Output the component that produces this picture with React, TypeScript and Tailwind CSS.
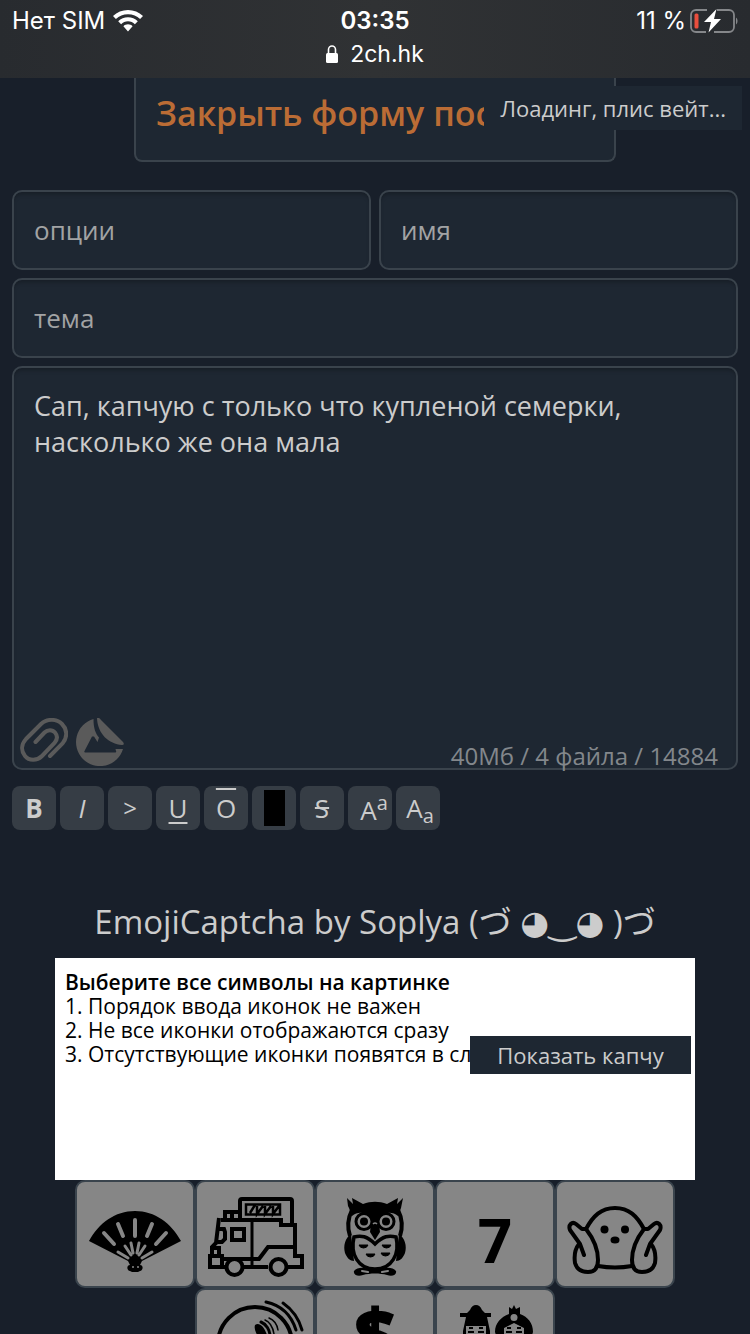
import React from "react";

function WifiIcon() {
  return (
    <svg viewBox="0 0 30 22" className="h-[22px] w-[30px]" fill="white" aria-hidden="true">
      <path d="M15 0C9.300 0 4 2.200 0 6.100L2.900 9.100C6.100 6 10.300 4.200 15 4.200S23.900 6 27.100 9.100L30 6.100C26 2.200 20.700 0 15 0Z" />
      <path d="M15 7.200c-3.700 0-7.200 1.500-9.800 4l2.900 3c1.800-1.800 4.200-2.900 6.900-2.900s5.100 1.100 6.900 2.900l2.900-3c-2.600-2.500-6.100-4-9.800-4Z" />
      <path d="M15 14.300c-1.800 0-3.400.7-4.600 1.900L15 21.600l4.600-5.400c-1.200-1.200-2.800-1.900-4.600-1.900Z" />
    </svg>
  );
}

function LockIcon() {
  return (
    <svg viewBox="0 0 12 18" className="h-[18px] w-3" aria-hidden="true">
      <rect y="8" width="12" height="10" rx="1.500" fill="white" />
      <path d="M2.500 9V4.500a3.500 3.500 0 0 1 7 0V9" fill="none" stroke="white" strokeWidth="1.600" />
    </svg>
  );
}

function BatteryIcon() {
  return (
    <svg viewBox="0 0 48 24" className="h-6 w-12" aria-hidden="true">
      <path d="M17 1H6a5 5 0 0 0-5 5v12a5 5 0 0 0 5 5h10M24 23h15a5 5 0 0 0 5-5V6a5 5 0 0 0-5-5H27" fill="none" stroke="#85878a" strokeWidth="1.800" />
      <path d="M46 8.500c2 1.500 2 5.500 0 7Z" fill="#85878a" />
      <rect x="4.500" y="4.500" width="4" height="15" rx="1.500" fill="#ea4e3d" />
      <path d="M26.500 0 14 13h7l-2.500 10.500L31 10h-7Z" fill="white" />
    </svg>
  );
}

function ClipIcon() {
  return (
    <svg viewBox="0 0 48 48" className="size-12" fill="none" stroke="#5a5a5a" strokeWidth="4" strokeLinecap="round" aria-hidden="true">
      <path d="M30 38 42.500 25.500C48 19 47 11 42 6S27.500 0 21 6L6 21C1 26.500 1 33 5 38s12 5 17 0L34.500 25c3-3.500 3-7.500.5-10.500s-7.500-3-10.500 0L15.500 24" />
    </svg>
  );
}

function StickerIcon() {
  return (
    <svg viewBox="0 0 48 48" className="size-12" fill="#5a5a5a" aria-hidden="true">
      <path d="M21 0Q23-1 25 2L47 24q2 3-1 3C33 26 21.500 16 21 0Z" />
      <path d="M17.500 1c0 9 2 14.500 5.500 18.500L21.500 24 18 18.500h-2L8.500 33c-.5 1 0 1.500 1 1.500H39c1 0 1.500-.5 1-1.500l-.5-2 7.500 0A24 24 0 1 1 17.500 1Z" />
    </svg>
  );
}

function FanIcon() {
  return (
    <>
      <path d="M12 59C22 41 38 29 58 29s36 12 46 30L65 79l-2 4c4 0 3 6 0 6l-2 1h-6l-2-1c-3 0-4-6 0-6l-2-4Z" fill="black" />
      <path d="M58 38v16M41 42l5 12M75 42l-5 12M27 51l10 11M89 51 79 62" stroke="#868686" strokeWidth="4" strokeLinecap="round" />
      <path d="M41 70l10 6M48 64l6 9M54 61l2 10M62 61l-2 10M68 64l-6 9M75 70l-10 6" stroke="#868686" strokeWidth="3" strokeLinecap="round" />
      <path d="M55 85h2M60 85h2" stroke="#868686" strokeWidth="1.500" />
    </>
  );
}

function TruckIcon() {
  return (
    <g fill="none" stroke="black" strokeWidth="4">
      <path d="M43 36V19q0-2 2-2h48q2 0 2 2v22" />
      <path d="M49 22.500h34v10H49ZM53 31l5-8M60 24v8l6-8M68 24v8l6-8M76 24v8l6-8" strokeWidth="2.500" />
      <path d="M28 37v-7h14M35 30v6" />
      <path d="M55 38v46" strokeWidth="3" />
      <path d="M24 38h60v5h14v31h7v11H91M71 85H47M28 85H13V74h12v10M15 73v-8l4-4 3-25M26 77h36l9-12h26" />
      <path d="M35 47h12v11H35ZM22 47h5l1 3v7l-3 3h-4M16 66h6v8" />
      <circle cx="37.500" cy="85" r="8" />
      <circle cx="81.500" cy="85" r="8" />
    </g>
  );
}

function OwlIcon() {
  return (
    <>
      {/* wings, head outline and feet */}
      <path d="M34 52c-6 4-8 12-6 19 2 5 5 8 9 8ZM82 52c6 4 8 12 6 19-2 5-5 8-9 8Z" />
      <path d="M33 54c-3-9-2-18 2-26h46c4 8 5 17 2 26" fill="none" stroke="black" strokeWidth="4" />
      <path d="M31 24l-1-8 6 6-1-6 11 6c8-3 16-3 24 0l11-6-1 6 6-6-2 10-3 8c-6-5-13-4-17 1l-2 7 1 8-5 8-5-8 1-8-2-7c-4-5-11-6-17-1l-3-8Z" />
      <path d="M37 89c3-4 10-4 14-2h14c4-2 11-2 14 2 1 4-4 6-9 4-7-2-17-2-24 0-5 2-10 0-9-4Z" />
      <path d="M45 89l6 1M65 90l6-1" stroke="#868686" strokeWidth="2" strokeLinecap="round" />
      {/* belly */}
      <path d="M58 62C50 54 44 53 37 55c-4 17 4 32 21 32s25-15 21-32c-7-2-13-1-21 7Z" fill="#868686" stroke="black" strokeWidth="3.500" />
      <path d="M42 63h9q-1 3-4.500 3t-4.500-3ZM65 63h9q-1 3-4.500 3t-4.500-3ZM49 72h9q-1 3-4.500 3t-4.500-3ZM64 71h9q-1 3-4.500 3t-4.500-3Z" stroke="black" />
      <g fill="#868686" stroke="black" strokeWidth="3">
        <circle cx="47" cy="39.500" r="8" />
        <circle cx="69" cy="39.500" r="8" />
      </g>
      <circle cx="47" cy="39.500" r="4" />
      <circle cx="69" cy="39.500" r="4" />
      <path d="M56 42q2-2 4 0" fill="none" stroke="#868686" strokeWidth="1.500" />
    </>
  );
}

function SevenIcon() {
  return (
    <text x="58" y="81" textAnchor="middle" fontSize="60" fontWeight="700" fontFamily="Open Sans, sans-serif">7</text>
  );
}

function GhostIcon() {
  return (
    <>
      <g fill="none" stroke="black" strokeWidth="4" strokeLinecap="round" strokeLinejoin="round">
        <path d="M29 47c7-13 15-21 29-21s22 8 29 21M41 84q17 3 34 0" />
        <path d="M29 47h-4l-6-5c-4-3-8 1-6 6l10 14 4 11M22 62c-4 5-5 12-4 19 2 7 8 9 13 9 7 0 10-4 10-12 0-12-5-22-12-31" />
        <path d="M87 47h4l6-5c4-3 8 1 6 6L93 62l-4 11M94 62c4 5 5 12 4 19-2 7-8 9-13 9-7 0-10-4-10-12 0-12 5-22 12-31" />
      </g>
      <circle cx="47.500" cy="47.500" r="4" />
      <circle cx="68" cy="47.500" r="4" />
      <ellipse cx="58" cy="58" rx="4.500" ry="3.500" />
    </>
  );
}

function DiscIcon() {
  return (
    <>
      <g fill="none" stroke="black" strokeLinecap="round">
        <circle cx="58" cy="54" r="37" strokeWidth="4" />
        <path d="M69 12c14 3 25 12 30 28M86 13c10 7 16 16 19 27" strokeWidth="3" />
        <path d="M64 32c5 2 9 8 9 14" strokeWidth="3" />
        <path d="M68 30c5 2 8 8 9 14M72 28c5 2 8 6 9 12" strokeWidth="1.500" />
      </g>
      <path d="M58 35c4-3 9 1 12 10l-3 8H62c1-6-6-12-4-18Z" />
      <path d="M38 46q4-4 7 0v10h-8Z" />
    </>
  );
}

function DollarIcon() {
  return (
    <text x="58" y="72" textAnchor="middle" fontSize="72" fontWeight="700" stroke="black" strokeWidth="3" fontFamily="Open Sans, sans-serif">$</text>
  );
}

function DollsIcon() {
  return (
    <>
      <path d="M33 20q2-5 6-5t6 5l3 3h6v4h-4l3 14v14H26V41l3-14h-6v-4h7Z" />
      <path d="M72 17l3 2 2-4 2 4 4-2v7c8 3 13 9 13 18l-4 13H62l-4-13c0-9 6-15 14-18Z" />
      <path d="M29 36h20v18H29ZM67 38l10-5 10 5v16H67Z" fill="#868686" />
      <circle cx="77" cy="27.500" r="3.500" fill="#868686" />
      <path d="M31 42h6M41 42h6M69 42h6M79 42h6M32 38h4M42 38h4M70 38h4M80 38h4" stroke="black" strokeWidth="2" />
    </>
  );
}

const markup = [
  { name: "Жирный", label: <b>B</b> },
  { name: "Курсив", label: <i>I</i> },
  { name: "Цитата", label: <span className="text-2xl">&gt;</span> },
  { name: "Подчёркнутый", label: <span className="underline underline-offset-4">U</span> },
  { name: "Надчёркнутый", label: <span className="overline">O</span> },
  { name: "Спойлер", label: <span className="block h-9 w-[21px] bg-black" /> },
  { name: "Зачёркнутый", label: <s>S</s> },
  { name: "Верхний индекс", label: <span className="pt-2 pl-2">A<sup className="text-xl">a</sup></span> },
  { name: "Нижний индекс", label: <span className="pt-1 pl-1">A<sub className="text-xl">a</sub></span> },
];

const emojis = [
  { name: "Веер", Icon: FanIcon },
  { name: "Грузовик", Icon: TruckIcon },
  { name: "Сова", Icon: OwlIcon },
  { name: "Семь", Icon: SevenIcon },
  { name: "Привидение", Icon: GhostIcon },
  { name: "Диск", Icon: DiscIcon },
  { name: "Доллар", Icon: DollarIcon },
  { name: "Куклы", Icon: DollsIcon },
];

const field =
  "block w-full rounded-[10px] border-2 border-[#3a434c] bg-[#1e2732] px-5 text-[#cccccc] shadow-[inset_0_4px_4px_-2px_rgba(0,0,0,0.25)] outline-none placeholder:text-[#a2a3a4]";

function StatusBar() {
  return (
    <header className="h-[78px] shrink-0 bg-linear-to-r from-[#282b2f] via-[#303234] to-[#282b2f] pt-1 font-['Inter',sans-serif] text-2xl text-white">
      <div className="grid grid-cols-3 items-center px-3 leading-[34px]">
        <div className="flex items-center gap-2">
          <span>Нет SIM</span>
          <WifiIcon />
        </div>
        <time className="text-center font-semibold">03:35</time>
        <div className="flex items-center justify-end gap-1">
          <span>11 %</span>
          <BatteryIcon />
        </div>
      </div>
      <div className="flex items-center justify-center gap-3 text-[23px] leading-8">
        <LockIcon />
        <span>2ch.hk</span>
      </div>
    </header>
  );
}

function PostForm() {
  return (
    <form className="mt-7 flex flex-col gap-2" onSubmit={(e) => e.preventDefault()}>
      <div className="grid grid-cols-2 gap-2">
        <input aria-label="опции" placeholder="опции" className={`${field} h-20 text-[26px]`} />
        <input aria-label="имя" placeholder="имя" className={`${field} h-20 text-[26px]`} />
      </div>
      <input aria-label="тема" placeholder="тема" className={`${field} h-20 text-[26px]`} />
      <div className="relative">
        <textarea
          aria-label="Комментарий"
          defaultValue="Сап, капчую с только что купленой семерки, насколько же она мала"
          className={`${field} h-[404px] resize-none py-5 text-[27px] leading-9`}
        />
        <div className="absolute bottom-1 left-2 flex gap-2">
          <button type="button" aria-label="Прикрепить файл"><ClipIcon /></button>
          <button type="button" aria-label="Стикеры"><StickerIcon /></button>
        </div>
        <span className="absolute right-5 bottom-0 text-2xl leading-7 text-[#83878c]">
          40Мб / 4 файла / 14884
        </span>
      </div>
      <div className="mt-2 flex gap-1">
        {markup.map(({ name, label }) => (
          <button
            key={name}
            type="button"
            aria-label={name}
            className="flex size-11 items-center justify-center rounded-lg bg-[#363d45] text-[26px] leading-none text-[#cccccc]"
          >
            {label}
          </button>
        ))}
      </div>
    </form>
  );
}

function Captcha() {
  return (
    <section className="mx-auto mt-16 max-w-[640px]">
      <h2 className="pb-2 text-center text-[33px] leading-[56px] whitespace-nowrap">
        EmojiCaptcha by Soplya (づ ◕‿◕ )づ
      </h2>
      <div className="relative h-[222px] bg-white px-[10px] py-3 text-[21px] leading-6 whitespace-nowrap text-black">
        <p className="font-semibold">Выберите все символы на картинке</p>
        <ol>
          <li>1. Порядок ввода иконок не важен</li>
          <li>2. Не все иконки отображаются сразу</li>
          <li>3. Отсутствующие иконки появятся в сл</li>
        </ol>
        <button
          type="button"
          className="absolute right-1 bottom-[106px] h-[38px] w-[221px] bg-[#1e2732] text-[22px] text-[#cccccc]"
        >
          Показать капчу
        </button>
      </div>
      <div className="flex flex-wrap justify-center">
        {emojis.map(({ name, Icon }) => (
          <button
            key={name}
            type="button"
            aria-label={name}
            className="h-[108px] w-[120px] rounded-[10px] border-2 border-[#3a444d] bg-[#868686]"
          >
            <svg viewBox="0 0 116 104" className="h-full w-full" aria-hidden="true">
              <Icon />
            </svg>
          </button>
        ))}
      </div>
    </section>
  );
}

export default function App() {
  return (
    <div className="flex h-screen flex-col overflow-hidden bg-[#181f2a] font-['Open_Sans','Noto_Sans_CJK_JP','DejaVu_Sans',sans-serif] text-[#cccccc]">
      <StatusBar />
      <main className="relative min-h-0 flex-1 overflow-hidden px-3">
        <button
          type="button"
          className="mx-auto block h-[84px] w-[482px] overflow-hidden rounded-b-lg border-2 border-t-0 border-[#3a434c] bg-[#1e2732] px-5 pb-3 text-left text-[34px] font-semibold whitespace-nowrap text-[#bb6c35]"
        >
          Закрыть форму пост
        </button>
        <div role="status" className="absolute top-2 right-2 h-11 bg-[#1e2732] px-4 text-[22px] leading-11">
          Лоадинг, плис вейт...
        </div>
        <PostForm />
        <Captcha />
      </main>
    </div>
  );
}
